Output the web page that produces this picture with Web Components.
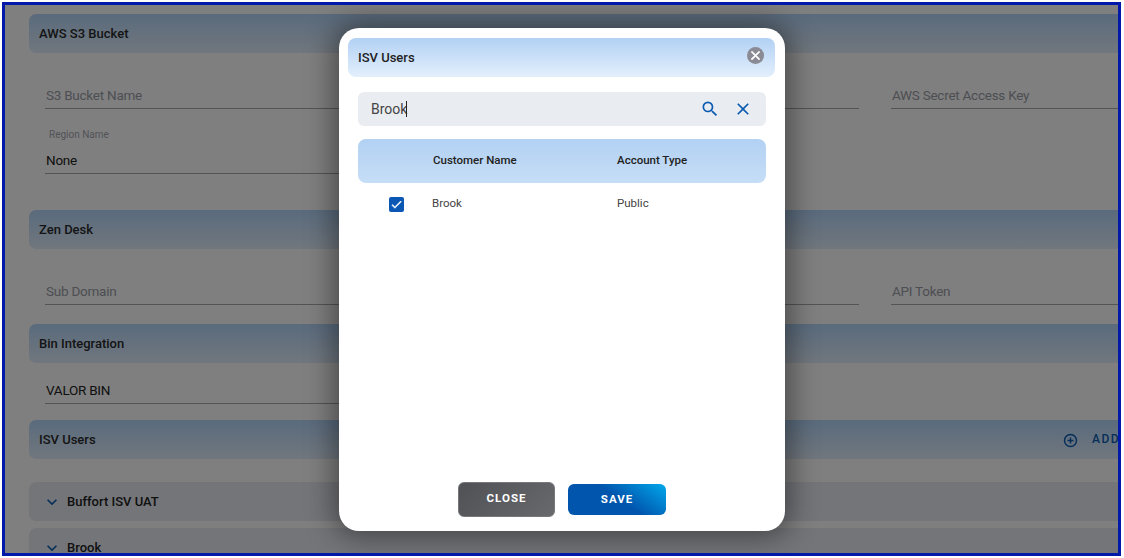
<!DOCTYPE html>
<html lang="en">
<head>
<meta charset="utf-8">
<title>ISV Users</title>
<style>
  html, body { margin: 0; padding: 0; background: #fff; }
  body { font-family: Roboto, "Liberation Sans", sans-serif; width: 1124px; height: 558px; overflow: hidden; }
</style>
</head>
<body>
<app-frame>
  <section-bar style="margin-top:9px">AWS S3 Bucket</section-bar>
  <field-row top="26">
    <form-field placeholder="S3 Bucket Name"></form-field>
    <form-field></form-field>
    <form-field placeholder="AWS Secret Access Key"></form-field>
  </field-row>
  <field-row top="18">
    <form-field label="Region Name" value="None"></form-field>
  </field-row>
  <section-bar style="margin-top:36px">Zen Desk</section-bar>
  <field-row top="26">
    <form-field placeholder="Sub Domain"></form-field>
    <form-field></form-field>
    <form-field placeholder="API Token"></form-field>
  </field-row>
  <section-bar style="margin-top:19px">Bin Integration</section-bar>
  <field-row top="11">
    <form-field value="VALOR BIN"></form-field>
  </field-row>
  <section-bar style="margin-top:16px" action="ADD">ISV Users</section-bar>
  <accordion-row style="margin-top:23px">Buffort ISV UAT</accordion-row>
  <accordion-row style="margin-top:7px">Brook</accordion-row>

  <isv-modal slot="overlay" heading="ISV Users" query="Brook">
    <user-row name="Brook" type="Public" checked></user-row>
    <dialog-button slot="footer" kind="close">CLOSE</dialog-button>
    <dialog-button slot="footer" kind="save">SAVE</dialog-button>
  </isv-modal>
</app-frame>

<script>
  "use strict";

  const ICONS = {
    search: '<path d="M15.5 14h-.79l-.28-.27A6.47 6.47 0 0 0 16 9.5 6.5 6.5 0 1 0 9.5 16c1.61 0 3.09-.59 4.23-1.57l.27.28v.79l5 4.99L20.49 19l-4.99-5zm-6 0C7.01 14 5 11.99 5 9.5S7.01 5 9.5 5 14 7.01 14 9.5 11.99 14 9.5 14z"/>',
    close: '<path d="M19 6.41 17.59 5 12 10.59 6.41 5 5 6.41 10.59 12 5 17.59 6.41 19 12 13.41 17.59 19 19 17.59 13.41 12z"/>',
    chevron: '<path d="M16.59 8.59 12 13.17 7.41 8.59 6 10l6 6 6-6z"/>',
    check: '<path d="M9 16.17 4.83 12l-1.42 1.41L9 19 21 7l-1.41-1.41z"/>'
  }

  function define(name, render) {
    customElements.define(name, class extends HTMLElement {
      constructor() {
        super()
        this.attachShadow({ mode: 'open' })
        this.shadowRoot.innerHTML = render(this)
      }
    })
  }

  define('app-frame', () => `
    <style>
      :host { display: block; position: relative; box-sizing: border-box; width: 1119px; height: 554px; margin: 2px 0 0 2px; border: 3px solid #0119a9; overflow: hidden; background: #fff; }
      .page { width: 1269px; padding-left: 24px; }
      .backdrop { position: absolute; inset: 0; background: rgba(0, 0, 0, .5); }
    </style>
    <div class="page"><slot></slot></div>
    <div class="backdrop"></div>
    <slot name="overlay"></slot>
  `)

  define('section-bar', (el) => `
    <style>
      :host { display: flex; align-items: center; justify-content: space-between; box-sizing: border-box; height: 39px; padding: 0 10px; border-radius: 7px; background: linear-gradient(180deg, #b4d6fb, #e2eefa); color: #2a2a2a; font-size: 13px; font-weight: 500; }
      .action { display: flex; align-items: center; position: absolute; left: 1058px; color: #0b5cb0; font-size: 12px; font-weight: 500; letter-spacing: 1.5px; }
      span.action { margin-top: -1px; }
      svg { width: 15px; height: 15px; margin-right: 14px; margin-top: 2px; }
    </style>
    <span><slot></slot></span>
    ${el.hasAttribute('action') ? `<span class="action"><svg viewBox="0 0 15 15" fill="none" stroke="#0b5cb0" stroke-width="1.5"><circle cx="7.5" cy="7.5" r="6"/><path d="M7.5 4.5v6M4.5 7.5h6"/></svg>${el.getAttribute('action')}</span>` : ''}
  `)

  define('field-row', (el) => `
    <style>
      :host { display: grid; grid-template-columns: repeat(3, 391px); column-gap: 32px; padding: 0 16px; margin-top: ${el.getAttribute('top')}px; }
    </style>
    <slot></slot>
  `)

  define('form-field', (el) => {
    const label = el.getAttribute('label')
    const value = el.getAttribute('value')
    const placeholder = el.getAttribute('placeholder')
    return `
    <style>
      :host { display: block; border-bottom: 1px solid #a8a8a8; box-sizing: border-box; height: ${label ? 47 : 30}px; position: relative; font-size: 13.5px; letter-spacing: -.25px; }
      .label { display: block; font-size: 10px; letter-spacing: 0; line-height: 12px; padding: 2px 0 0 4px; color: #a4a6b0; }
      .text { display: block; line-height: 16px; padding: 8px 0 0 1px; }
      .labelled { padding-top: 11px; }
      .placeholder { color: #9a9da6; }
      .value { color: #222; }
    </style>
    ${label ? `<span class="label">${label}</span>` : ''}
    ${value ? `<span class="text value ${label ? 'labelled' : ''}">${value}</span>` : ''}
    ${placeholder ? `<span class="text placeholder">${placeholder}</span>` : ''}
  `})

  define('accordion-row', () => `
    <style>
      :host { display: flex; align-items: center; box-sizing: border-box; height: 39px; padding-left: 13px; border-radius: 7px; background: #e8ebf2; color: #222; font-size: 13px; font-weight: 500; }
      svg { width: 20px; height: 20px; fill: #0b5cb0; margin-right: 5px; }
    </style>
    <svg viewBox="0 0 24 24">${ICONS.chevron}</svg>
    <slot></slot>
  `)

  define('isv-modal', (el) => `
    <style>
      :host { position: absolute; left: 334px; top: 23px; width: 446px; height: 503px; box-sizing: border-box; padding: 10px 10px 0 9px; display: flex; flex-direction: column; background: #fff; border-radius: 20px; box-shadow: 0 0 28px 6px rgba(0, 0, 0, .42); font-family: Roboto, "Liberation Sans", sans-serif; }
      header { display: flex; align-items: center; justify-content: space-between; height: 39px; padding: 0 11px 0 10px; border-radius: 8px; background: linear-gradient(180deg, #b2d1f4, #e3effc); color: #222; font-size: 13px; font-weight: 500; }
      header span { padding-bottom: 1px; }
      .x { width: 17px; height: 17px; margin-top: -5px; border-radius: 50%; background: #8a8b95; display: flex; align-items: center; justify-content: center; }
      .x svg { width: 15px; height: 15px; fill: #fff; stroke: #fff; stroke-width: 1; }
      .body { margin: 15px 9px 0 10px; flex: 1; display: flex; flex-direction: column; }
      .search { display: flex; align-items: center; height: 34px; padding: 0 13px; border-radius: 6px; background: #e9ecf1; color: #444; font-size: 14px; }
      .caret { width: 1px; height: 16px; background: #222; margin-left: -1px; }
      .search svg { width: 20px; height: 20px; fill: #0b5cb0; }
      .search .find { margin-left: auto; margin-right: 13px; }
      .head { display: grid; grid-template-columns: 75px 184px 1fr; align-items: center; height: 44px; box-sizing: border-box; padding-bottom: 2px; margin-top: 13px; border-radius: 8px; background: linear-gradient(180deg, #b2d1f3, #c6ddf6); color: #222; font-size: 11.5px; font-weight: 500; }
      .rows { flex: 1; }
      footer { display: flex; justify-content: center; align-items: center; gap: 13px; height: 35px; margin-bottom: 14px; }
    </style>
    <header><span>${el.getAttribute('heading')}</span><div class="x"><svg viewBox="0 0 24 24">${ICONS.close}</svg></div></header>
    <div class="body">
      <div class="search">
        <span>${el.getAttribute('query')}</span><span class="caret"></span>
        <svg class="find" viewBox="0 0 24 24">${ICONS.search}</svg>
        <svg class="clear" viewBox="0 0 24 24">${ICONS.close}</svg>
      </div>
      <div class="head"><span></span><span>Customer Name</span><span>Account Type</span></div>
      <div class="rows"><slot></slot></div>
      <footer><slot name="footer"></slot></footer>
    </div>
  `)

  define('user-row', (el) => `
    <style>
      :host { display: grid; grid-template-columns: 31px 43px 185px 1fr; align-items: center; height: 40px; color: #444; font-size: 11.5px; }
      .box { grid-column: 2; width: 15px; height: 15px; margin-top: 2px; border-radius: 2px; background: #0b57b4; display: flex; align-items: center; justify-content: center; }
      .box svg { width: 13px; height: 13px; fill: #fff; stroke: #fff; stroke-width: 1; }
    </style>
    <div class="box">${el.hasAttribute('checked') ? `<svg viewBox="0 0 24 24">${ICONS.check}</svg>` : ''}</div>
    <span>${el.getAttribute('name')}</span>
    <span>${el.getAttribute('type')}</span>
  `)

  define('dialog-button', (el) => `
    <style>
      :host { display: flex; align-items: center; justify-content: center; box-sizing: border-box; width: 98px; padding-bottom: 2px; color: #fff; font-size: 11.5px; font-weight: 700; letter-spacing: 1px; }
      :host([kind=close]) { width: 97px; height: 35px; margin-top: -1px; border-radius: 6px; border: 1px solid #77787c; background: linear-gradient(135deg, #505155, #68696d); }
      :host([kind=save]) { height: 31px; border-radius: 6px; padding-bottom: 1px; background: linear-gradient(35deg, #0155ad 52%, #01a8ec); }
    </style>
    <slot></slot>
  `)
</script>
</body>
</html>
